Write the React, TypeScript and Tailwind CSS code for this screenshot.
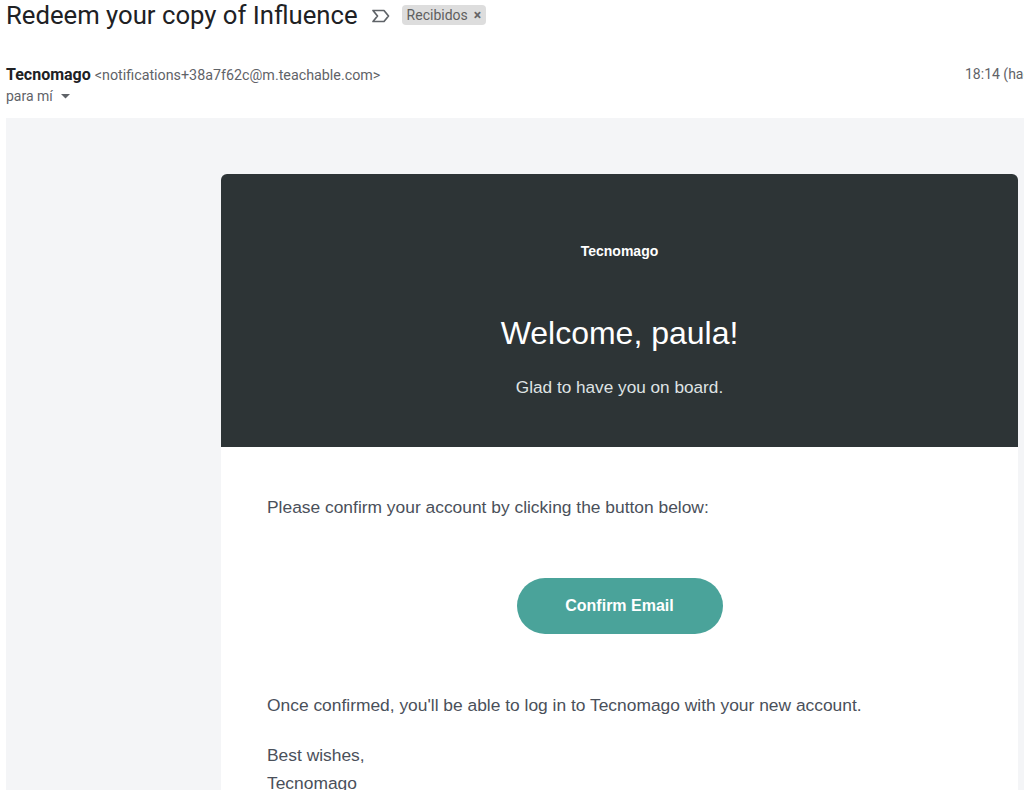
import React from "react";

const ImportanceIcon = () => (
  <svg width="20" height="16" viewBox="0 0 20 16" fill="none" stroke="#5f6368" strokeWidth="1.7">
    <path d="M2 2.5h11l4.5 5.5-4.5 5.5H2l4.5-5.5z" strokeLinejoin="round" />
  </svg>
);

const EmailHeader = () => (
  <div className="font-['Roboto',sans-serif]">
    <div className="flex items-center h-[30px] pl-[6px]">
      <h1 className="text-[25.7px] leading-[30px] text-[#202124] font-normal whitespace-nowrap">
        Redeem your copy of Influence
      </h1>
      <span className="ml-[13px] mt-[1px]">
        <ImportanceIcon />
      </span>
      <span className="ml-[11px] flex items-center h-[20px] px-[5px] rounded-[4px] bg-[#dddddd] text-[14px] text-[#5f5f5f]">
        Recibidos
        <span className="ml-[6px] text-[14px] font-bold text-[#666]">×</span>
      </span>
    </div>
    <div className="flex items-start justify-between pl-[6px] mt-[33px] h-[22px]">
      <div className="flex items-baseline whitespace-nowrap">
        <span className="text-[16px] font-bold text-[#202124]">Tecnomago</span>
        <span className="ml-[4px] text-[14.3px] text-[#5f6368]">
          &lt;notifications+38a7f62c@m.teachable.com&gt;
        </span>
      </div>
      <span className="w-[59px] overflow-hidden text-[14px] text-[#5f6368] whitespace-nowrap mt-[1px]">
        18:14 (hace 0 minutos)
      </span>
    </div>
    <div className="flex items-center pl-[6px] mt-[1px] h-[20px] text-[14px] text-[#5f6368]">
      para mí
      <svg className="ml-[8px]" width="9" height="5" viewBox="0 0 9 5">
        <path d="M0 0h9L4.5 4.5z" fill="#5f6368" />
      </svg>
    </div>
  </div>
);

const EmailCard = () => (
  <div className="w-[797px] font-['Liberation_Sans',Arial,sans-serif]">
    <div className="h-[273px] bg-[#2d3436] rounded-t-[6px] flex flex-col items-center text-white">
      <p className="mt-[68px] text-[14px] font-bold leading-[18px]">Tecnomago</p>
      <p className="mt-[55px] text-[32px] leading-[36px]">Welcome, paula!</p>
      <p className="mt-[26px] text-[17.2px] leading-[20px] text-[#dfe3e4]">
        Glad to have you on board.
      </p>
    </div>
    <div className="bg-white pl-[46px] pr-[46px] pt-[50px] pb-[40px] text-[17.4px] leading-[20px] text-[#4a505a]">
      <p>Please confirm your account by clicking the button below:</p>
      <div className="flex justify-center mt-[61px]">
        <button className="w-[206px] h-[56px] rounded-full bg-[#4aa39a] text-white font-bold text-[16px]">
          Confirm Email
        </button>
      </div>
      <p className="mt-[61px]">
        Once confirmed, you'll be able to log in to Tecnomago with your new account.
      </p>
      <p className="mt-[26px] leading-[28px]">
        Best wishes,
        <br />
        Tecnomago
      </p>
    </div>
  </div>
);

export default function App() {
  return (
    <div className="w-[1024px] h-[790px] overflow-hidden bg-white">
      <EmailHeader />
      <div className="ml-[6px] mt-[12px] bg-[#f4f5f7] pl-[215px] pr-[6px] pt-[56px] min-h-[700px]">
        <EmailCard />
      </div>
    </div>
  );
}
